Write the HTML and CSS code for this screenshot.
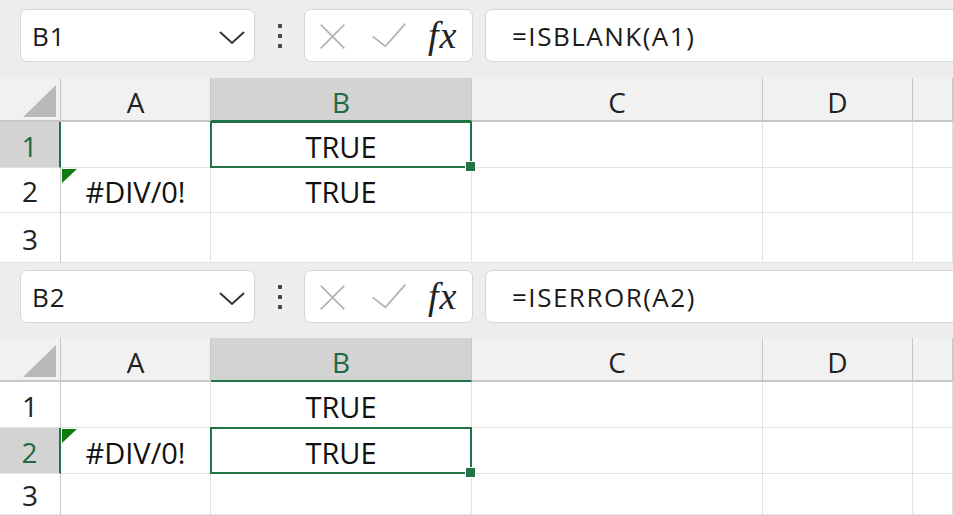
FILE: index.html
```html
<!DOCTYPE html>
<html lang="en">
<head>
    <meta charset="UTF-8">
    <meta name="viewport" content="width=device-width, initial-scale=1.0">
    <title>ISBLANK and ISERROR</title>
    <link rel="stylesheet" href="styles.css">
</head>
<body>

<section class="panel panel-first">
    <div class="formula-bar">
        <div class="name-box">
            <span>B1</span>
            <svg class="chevron" width="28" height="16" viewBox="0 0 28 16"><polyline points="2,3 14,14 26,3" fill="none" stroke="#333" stroke-width="2"/></svg>
        </div>
        <div class="more-dots"><i></i><i></i><i></i></div>
        <div class="fn-box">
            <svg width="32" height="32" viewBox="0 0 32 32"><path d="M2 2 L30 30 M30 2 L2 30" stroke="#b3b3b3" stroke-width="2" fill="none"/></svg>
            <svg width="40" height="32" viewBox="0 0 40 32"><polyline points="2,17 16,28 38,3" fill="none" stroke="#b3b3b3" stroke-width="2"/></svg>
            <span class="fx">fx</span>
        </div>
        <div class="formula-input">=ISBLANK(A1)</div>
    </div>
    <div class="sheet">
        <div class="corner"><span class="corner-mark"></span></div>
        <div class="col-head">A</div>
        <div class="col-head selected">B</div>
        <div class="col-head">C</div>
        <div class="col-head">D</div>
        <div class="col-head"></div>

        <div class="row-head selected">1</div>
        <div class="cell"></div>
        <div class="cell active">TRUE<span class="handle"></span></div>
        <div class="cell"></div>
        <div class="cell"></div>
        <div class="cell"></div>

        <div class="row-head">2</div>
        <div class="cell flagged">#DIV/0!</div>
        <div class="cell">TRUE</div>
        <div class="cell"></div>
        <div class="cell"></div>
        <div class="cell"></div>

        <div class="row-head">3</div>
        <div class="cell"></div>
        <div class="cell"></div>
        <div class="cell"></div>
        <div class="cell"></div>
        <div class="cell"></div>
    </div>
</section>

<section class="panel panel-second">
    <div class="formula-bar">
        <div class="name-box">
            <span>B2</span>
            <svg class="chevron" width="28" height="16" viewBox="0 0 28 16"><polyline points="2,3 14,14 26,3" fill="none" stroke="#333" stroke-width="2"/></svg>
        </div>
        <div class="more-dots"><i></i><i></i><i></i></div>
        <div class="fn-box">
            <svg width="32" height="32" viewBox="0 0 32 32"><path d="M2 2 L30 30 M30 2 L2 30" stroke="#b3b3b3" stroke-width="2" fill="none"/></svg>
            <svg width="40" height="32" viewBox="0 0 40 32"><polyline points="2,17 16,28 38,3" fill="none" stroke="#b3b3b3" stroke-width="2"/></svg>
            <span class="fx">fx</span>
        </div>
        <div class="formula-input">=ISERROR(A2)</div>
    </div>
    <div class="sheet">
        <div class="corner"><span class="corner-mark"></span></div>
        <div class="col-head">A</div>
        <div class="col-head selected">B</div>
        <div class="col-head">C</div>
        <div class="col-head">D</div>
        <div class="col-head"></div>

        <div class="row-head">1</div>
        <div class="cell"></div>
        <div class="cell">TRUE</div>
        <div class="cell"></div>
        <div class="cell"></div>
        <div class="cell"></div>

        <div class="row-head selected">2</div>
        <div class="cell flagged">#DIV/0!</div>
        <div class="cell active">TRUE<span class="handle"></span></div>
        <div class="cell"></div>
        <div class="cell"></div>
        <div class="cell"></div>

        <div class="row-head">3</div>
        <div class="cell"></div>
        <div class="cell"></div>
        <div class="cell"></div>
        <div class="cell"></div>
        <div class="cell"></div>
    </div>
</section>

</body>
</html>
```

FILE: styles.css
```css
* {
    box-sizing: border-box;
}
body {
    margin: 0;
    width: 953px;
    height: 515px;
    overflow: hidden;
    background-color: #fff;
    font-family: 'Open Sans', Arial, sans-serif;
    color: #222;
}
.panel {
    display: flex;
    flex-direction: column;
    overflow: hidden;
}
.panel-first {
    height: 263px;
}
.panel-second {
    height: 252px;
}
.formula-bar {
    display: flex;
    align-items: flex-start;
    background-color: #eeecec;
    padding-left: 20px;
}
.panel-first .formula-bar {
    height: 78px;
    padding-top: 9px;
}
.panel-second .formula-bar {
    height: 76px;
    padding-top: 7px;
}
.name-box, .fn-box, .formula-input {
    height: 53px;
    background-color: #fff;
    border: 1px solid #d6d6d6;
    border-radius: 7px;
}
.name-box {
    width: 235px;
    display: flex;
    align-items: center;
    justify-content: space-between;
    padding: 0 8px 0 11px;
    font-size: 26px;
    letter-spacing: 1px;
    color: #1a1a1a;
}
.chevron {
    margin-top: 2px;
}
.more-dots {
    width: 49px;
    height: 53px;
    display: flex;
    flex-direction: column;
    align-items: center;
    justify-content: center;
    gap: 6px;
}
.more-dots i {
    width: 4px;
    height: 4px;
    background-color: #444;
    border-radius: 1px;
}
.fn-box {
    width: 169px;
    display: flex;
    align-items: center;
    padding-left: 13px;
}
.fn-box svg:nth-child(1) {
    width: 29px;
    height: 27px;
    margin-top: 2px;
}
.fn-box svg:nth-child(2) {
    width: 38px;
    height: 29px;
    margin-left: 23px;
}
.fx {
    margin-left: 20px;
    font-family: 'Liberation Serif', 'DejaVu Serif', serif;
    font-style: italic;
    font-size: 38px;
    color: #222;
    line-height: 1;
    margin-top: -2px;
    letter-spacing: 1px;
}
.formula-input {
    flex: 1;
    margin-left: 12px;
    margin-right: -12px;
    display: flex;
    align-items: center;
    padding-left: 26px;
    font-size: 26px;
    letter-spacing: 1.5px;
    color: #1a1a1a;
}
.sheet {
    flex: 1;
    display: grid;
    grid-template-columns: 61px 150px 261px 291px 150px 1fr;
}
.panel-first .sheet {
    grid-template-rows: 44px 46px 45px 1fr;
}
.panel-second .sheet {
    grid-template-rows: 44px 46px 46px 1fr;
}
.corner, .col-head {
    background-color: #f1f1f1;
    border-bottom: 2px solid #c6c6c6;
    border-right: 1px solid #c6c6c6;
}
.corner {
    position: relative;
}
.corner-mark {
    position: absolute;
    right: 4px;
    bottom: 3px;
    width: 0;
    height: 0;
    border-left: 33px solid transparent;
    border-bottom: 32px solid #b9b9b9;
}
.col-head {
    display: flex;
    align-items: center;
    justify-content: center;
    padding-top: 5px;
    font-size: 28px;
}
.col-head.selected {
    background-color: #d3d3d3;
    color: #1e6b41;
    border-bottom-color: #217346;
}
.row-head {
    display: flex;
    align-items: center;
    justify-content: center;
    padding-top: 2px;
    font-size: 28px;
    background-color: #fff;
    border-right: 1px solid #c6c6c6;
    border-bottom: 1px solid #e1e1e1;
}
.row-head.selected {
    background-color: #d3d3d3;
    color: #1e6b41;
    border-right: 2px solid #217346;
}
.cell {
    position: relative;
    display: flex;
    align-items: center;
    justify-content: center;
    padding-top: 3px;
    font-size: 29px;
    color: #111;
    border-right: 1px solid #e1e1e1;
    border-bottom: 1px solid #e1e1e1;
}
.cell.active::after {
    content: "";
    position: absolute;
    top: -1px;
    left: -1px;
    right: -1px;
    bottom: -1px;
    border: 2px solid #217346;
    z-index: 2;
}
.handle {
    position: absolute;
    right: -5px;
    bottom: -5px;
    width: 11px;
    height: 11px;
    background-color: #217346;
    border: 1px solid #fff;
    z-index: 3;
}
.cell.flagged::before {
    content: "";
    position: absolute;
    top: 1px;
    left: 1px;
    width: 0;
    height: 0;
    border-top: 14px solid #107c10;
    border-right: 15px solid transparent;
}
```
